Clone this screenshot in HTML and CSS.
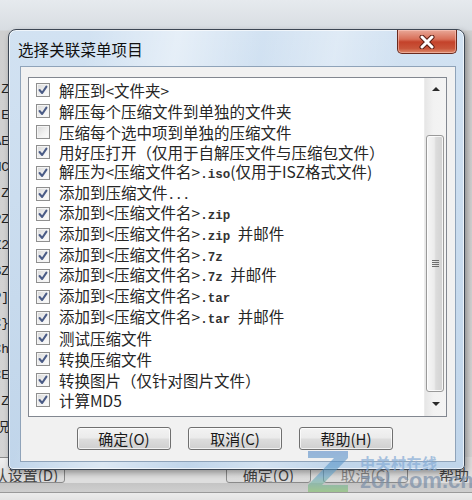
FILE: index.html
```html
<!DOCTYPE html>
<html lang="zh-CN">
<head>
<meta charset="utf-8">
<title>选择关联菜单项目</title>
<link rel="stylesheet" href="styles.css">
</head>
<body>
<div class="desk">
  <div class="under">
    <div class="under-top">
      <div class="under-left">
        <span>Z</span><span>E</span><span>AE</span><span>MC</span><span>Z</span><span>PZ</span><span>Z2</span><span>BZ</span><span>P]</span><span>C}</span><span>Ch</span><span>CE</span><span>Z</span><span>况</span>
      </div>
    </div>
    <div class="under-buttons">
      <div class="ubtn ubtn-first">默认设置(D)</div>
      <div class="ubtn ubtn-ok">确定(O)</div>
      <div class="ubtn ubtn-cancel">取消(C)</div>
      <div class="ubtn ubtn-help">帮助</div>
    </div>
    <div class="under-foot"></div>
  </div>

  <div class="window">
    <div class="titlebar">
      <div class="title">选择关联菜单项目</div>
      <div class="close">
        <svg width="18" height="14" viewBox="0 0 18 14">
          <path d="M4 2 L14 12 M14 2 L4 12" stroke="#5a1e14" stroke-width="5" stroke-linecap="round"/>
          <path d="M4 2 L14 12 M14 2 L4 12" stroke="#ffffff" stroke-width="3" stroke-linecap="round"/>
        </svg>
      </div>
    </div>
    <div class="client">
      <div class="listbox">
        <div class="items">
          <div class="row"><span class="cb on"><svg viewBox="0 0 14 14"><path d="M3 7 L6 10.5 L11 3"/></svg></span><span class="label">解压到&lt;文件夹&gt;</span></div>
          <div class="row"><span class="cb on"><svg viewBox="0 0 14 14"><path d="M3 7 L6 10.5 L11 3"/></svg></span><span class="label">解压每个压缩文件到单独的文件夹</span></div>
          <div class="row"><span class="cb"></span><span class="label">压缩每个选中项到单独的压缩文件</span></div>
          <div class="row"><span class="cb on"><svg viewBox="0 0 14 14"><path d="M3 7 L6 10.5 L11 3"/></svg></span><span class="label">用好压打开（仅用于自解压文件与压缩包文件）</span></div>
          <div class="row"><span class="cb on"><svg viewBox="0 0 14 14"><path d="M3 7 L6 10.5 L11 3"/></svg></span><span class="label">解压为&lt;压缩文件名&gt;<span class="mono">.iso</span>(仅用于ISZ格式文件)</span></div>
          <div class="row"><span class="cb on"><svg viewBox="0 0 14 14"><path d="M3 7 L6 10.5 L11 3"/></svg></span><span class="label">添加到压缩文件<span class="mono">...</span></span></div>
          <div class="row"><span class="cb on"><svg viewBox="0 0 14 14"><path d="M3 7 L6 10.5 L11 3"/></svg></span><span class="label">添加到&lt;压缩文件名&gt;<span class="mono">.zip</span></span></div>
          <div class="row"><span class="cb on"><svg viewBox="0 0 14 14"><path d="M3 7 L6 10.5 L11 3"/></svg></span><span class="label">添加到&lt;压缩文件名&gt;<span class="mono">.zip </span>并邮件</span></div>
          <div class="row"><span class="cb on"><svg viewBox="0 0 14 14"><path d="M3 7 L6 10.5 L11 3"/></svg></span><span class="label">添加到&lt;压缩文件名&gt;<span class="mono">.7z</span></span></div>
          <div class="row"><span class="cb on"><svg viewBox="0 0 14 14"><path d="M3 7 L6 10.5 L11 3"/></svg></span><span class="label">添加到&lt;压缩文件名&gt;<span class="mono">.7z </span>并邮件</span></div>
          <div class="row"><span class="cb on"><svg viewBox="0 0 14 14"><path d="M3 7 L6 10.5 L11 3"/></svg></span><span class="label">添加到&lt;压缩文件名&gt;<span class="mono">.tar</span></span></div>
          <div class="row"><span class="cb on"><svg viewBox="0 0 14 14"><path d="M3 7 L6 10.5 L11 3"/></svg></span><span class="label">添加到&lt;压缩文件名&gt;<span class="mono">.tar </span>并邮件</span></div>
          <div class="row"><span class="cb on"><svg viewBox="0 0 14 14"><path d="M3 7 L6 10.5 L11 3"/></svg></span><span class="label">测试压缩文件</span></div>
          <div class="row"><span class="cb on"><svg viewBox="0 0 14 14"><path d="M3 7 L6 10.5 L11 3"/></svg></span><span class="label">转换压缩文件</span></div>
          <div class="row"><span class="cb on"><svg viewBox="0 0 14 14"><path d="M3 7 L6 10.5 L11 3"/></svg></span><span class="label">转换图片（仅针对图片文件）</span></div>
          <div class="row"><span class="cb on"><svg viewBox="0 0 14 14"><path d="M3 7 L6 10.5 L11 3"/></svg></span><span class="label">计算MD5</span></div>
        </div>
        <div class="scroll">
          <div class="sb-btn"><span class="arrow-up"></span></div>
          <div class="sb-gap"></div>
          <div class="thumb"><span class="grip"></span></div>
          <div class="sb-btn sb-down"><span class="arrow-down"></span></div>
        </div>
      </div>
      <div class="buttons">
        <div class="btn">确定(O)</div>
        <div class="btn">取消(C)</div>
        <div class="btn">帮助(H)</div>
      </div>
    </div>
  </div>

  <div class="watermark">
    <svg class="zlogo" width="44" height="44" viewBox="0 0 44 44">
      <defs>
        <linearGradient id="zg" x1="0" y1="0" x2="0" y2="1">
          <stop offset="0" stop-color="#4f86c8"/>
          <stop offset="0.6" stop-color="#5aa0c8"/>
          <stop offset="1" stop-color="#7cc060"/>
        </linearGradient>
      </defs>
      <polygon points="2,2 42,2 42,9 16,36 42,36 42,43 2,43 2,36 28,9 2,9" fill="url(#zg)"/>
    </svg>
    <div class="wm-text">
      <span class="wm-cn">中关村在线</span>
      <span class="wm-en">zol.com.cn</span>
    </div>
  </div>
</div>
</body>
</html>
```

FILE: styles.css
```css
html, body {
  margin: 0;
  padding: 0;
}
body {
  width: 472px;
  height: 500px;
  overflow: hidden;
  font-family: "Noto Sans CJK SC", "Noto Sans", sans-serif;
}
.desk {
  position: relative;
  width: 472px;
  height: 500px;
  overflow: hidden;
}

/* underlying dialog */
.under {
  display: flex;
  flex-direction: column;
  height: 500px;
  background: linear-gradient(180deg, #e6eaee 0%, #d8dde2 30px, #cfcfcf 31px, #d4d4d4 100%);
}
.under-top {
  flex: 1;
  display: flex;
}
.under-left {
  width: 9px;
  margin-top: 80px;
  display: flex;
  flex-direction: column;
  gap: 6px;
  overflow: hidden;
  font-family: "Liberation Mono", monospace;
  font-size: 13px;
  color: #222;
}
.under-left span {
  display: flex;
  justify-content: flex-end;
  white-space: nowrap;
  line-height: 20px;
}
.under-buttons {
  height: 26px;
  display: flex;
  align-items: flex-end;
  background: #dedede;
}
.ubtn {
  height: 26px;
  box-sizing: border-box;
  border: 1px solid #8a8a8a;
  border-radius: 3px;
  background: linear-gradient(#f0f0f0, #dadada);
  font-size: 15px;
  line-height: 34px;
  color: #444;
  text-align: center;
  overflow: hidden;
  white-space: nowrap;
}
.ubtn-first {
  width: 104px;
  margin-left: -29px;
}
.ubtn-ok {
  width: 94px;
  margin-left: 161px;
}
.ubtn-cancel {
  width: 94px;
  margin-left: 12px;
  color: #8a8a8a;
}
.ubtn-help {
  width: 40px;
  margin-left: 28px;
  border: none;
  background: none;
}
.under-foot {
  height: 17px;
  background: linear-gradient(180deg, #c4c4c4 0, #cfcfcf 9px, #9a9a9a 9px, #9a9a9a 10px, #ececec 10px, #e4e4e4 100%);
}

/* dialog window */
.window {
  position: absolute;
  left: 8px;
  top: 29px;
  width: 457px;
  height: 441px;
  box-sizing: border-box;
  border: 1px solid #3d4754;
  border-radius: 8px 8px 5px 5px;
  background:
    linear-gradient(100deg, rgba(255,255,255,0) 15%, rgba(255,255,255,0.45) 32%, rgba(255,255,255,0) 48%, rgba(255,255,255,0.3) 62%, rgba(255,255,255,0) 75%),
    linear-gradient(180deg, #d2e2f2 0%, #c0d5ea 100%);
  box-shadow: inset 0 0 0 1px rgba(255,255,255,0.65), 2px 3px 6px rgba(0,0,0,0.35);
  display: flex;
  flex-direction: column;
}
.titlebar {
  height: 36px;
  display: flex;
  justify-content: space-between;
  align-items: center;
  padding-left: 9px;
  padding-right: 7px;
}
.title {
  font-size: 15.5px;
  color: #111;
  letter-spacing: 0.1px;
  margin-top: 1px;
}
.close {
  align-self: flex-start;
  width: 60px;
  height: 24px;
  box-sizing: border-box;
  border: 1px solid #6a2a1e;
  border-top: none;
  border-radius: 0 0 5px 5px;
  background: linear-gradient(180deg, #e9a898 0%, #d86f58 40%, #c4422a 52%, #c9553a 80%, #dd8a6c 100%);
  box-shadow: inset 0 0 0 1px rgba(255,210,200,0.5);
  display: flex;
  align-items: center;
  justify-content: center;
}
.client {
  flex: 1;
  margin: 0 8px 7px 11px;
  border: 1px solid #8fa3b9;
  background: #f1f1f1;
  padding: 10px 8px 0 7px;
  display: flex;
  flex-direction: column;
}
.listbox {
  height: 340px;
  box-sizing: border-box;
  border: 1px solid #828790;
  background: #ffffff;
  display: flex;
}
.items {
  flex: 1;
  padding: 2px 0 0 7px;
  display: flex;
  flex-direction: column;
}
.row {
  height: 20.67px;
  display: flex;
  align-items: center;
  white-space: nowrap;
}
.cb {
  width: 14px;
  height: 14px;
  box-sizing: border-box;
  border: 1px solid #8f8f8f;
  background: linear-gradient(135deg, #d8d8d8 0%, #f2f2f2 60%, #fcfcfc 100%);
  box-shadow: inset 0 0 0 1px #f4f4f4;
  flex: none;
  display: flex;
  align-items: center;
  justify-content: center;
}
.cb svg {
  width: 12px;
  height: 12px;
}
.cb svg path {
  fill: none;
  stroke: #4a5b86;
  stroke-width: 2.4;
  stroke-linecap: round;
  stroke-linejoin: round;
}
.label {
  margin-left: 9px;
  font-size: 15.5px;
  color: #262626;
  line-height: 20px;
}
.mono {
  font-family: "Liberation Mono", monospace;
  font-size: 12.5px;
  font-weight: bold;
  color: #333;
  white-space: pre;
}

/* scrollbar */
.scroll {
  width: 21px;
  display: flex;
  flex-direction: column;
  background: linear-gradient(90deg, #e6e6e6 0%, #f2f2f2 40%, #f4f4f4 100%);
  border-left: 1px solid #ececec;
}
.sb-btn {
  height: 18px;
  display: flex;
  align-items: center;
  justify-content: center;
  flex: none;
}
.sb-down {
  flex: 1;
  align-items: flex-end;
  padding-bottom: 10px;
}
.arrow-up {
  width: 0;
  height: 0;
  border-left: 4px solid transparent;
  border-right: 4px solid transparent;
  border-bottom: 4px solid #2a2a2a;
  margin-top: 4px;
}
.arrow-down {
  width: 0;
  height: 0;
  border-left: 4px solid transparent;
  border-right: 4px solid transparent;
  border-top: 4px solid #2a2a2a;
}
.sb-gap {
  height: 39px;
  flex: none;
}
.thumb {
  height: 257px;
  flex: none;
  margin: 0 2px 0 1px;
  box-sizing: border-box;
  border: 1px solid #9a9a9a;
  border-radius: 3px;
  background: linear-gradient(90deg, #f6f6f6 0%, #ececec 45%, #dcdcdc 55%, #d2d2d2 100%);
  box-shadow: inset 0 0 0 1px rgba(255,255,255,0.8);
  display: flex;
  align-items: center;
  justify-content: center;
}
.grip {
  width: 7px;
  height: 7px;
  background: repeating-linear-gradient(180deg, #6e6e6e 0, #6e6e6e 1px, transparent 1px, transparent 2px);
}

/* buttons */
.buttons {
  display: flex;
  gap: 17px;
  padding-left: 49px;
  margin-top: 10px;
}
.btn {
  width: 94px;
  height: 23px;
  box-sizing: border-box;
  border: 1px solid #707070;
  border-radius: 3px;
  background: linear-gradient(180deg, #f3f3f3 0%, #ebebeb 48%, #dddddd 52%, #cfcfcf 100%);
  box-shadow: inset 0 0 0 1px rgba(255,255,255,0.7);
  font-size: 15px;
  line-height: 21px;
  color: #1a1a1a;
  text-align: center;
}

/* watermark */
.watermark {
  position: absolute;
  left: 306px;
  top: 449px;
  display: flex;
  gap: 10px;
  opacity: 0.7;
  pointer-events: none;
}
.zlogo {
  opacity: 0.8;
}
.wm-text {
  display: flex;
  flex-direction: column;
  margin-top: 6px;
}
.wm-cn {
  font-size: 15px;
  font-weight: bold;
  color: #86acd6;
  line-height: 16px;
  letter-spacing: 0.5px;
}
.wm-en {
  font-family: "Liberation Sans", Arial, sans-serif;
  font-size: 22px;
  font-weight: bold;
  color: #7b8fa8;
  line-height: 22px;
  margin-top: -1px;
}
```
